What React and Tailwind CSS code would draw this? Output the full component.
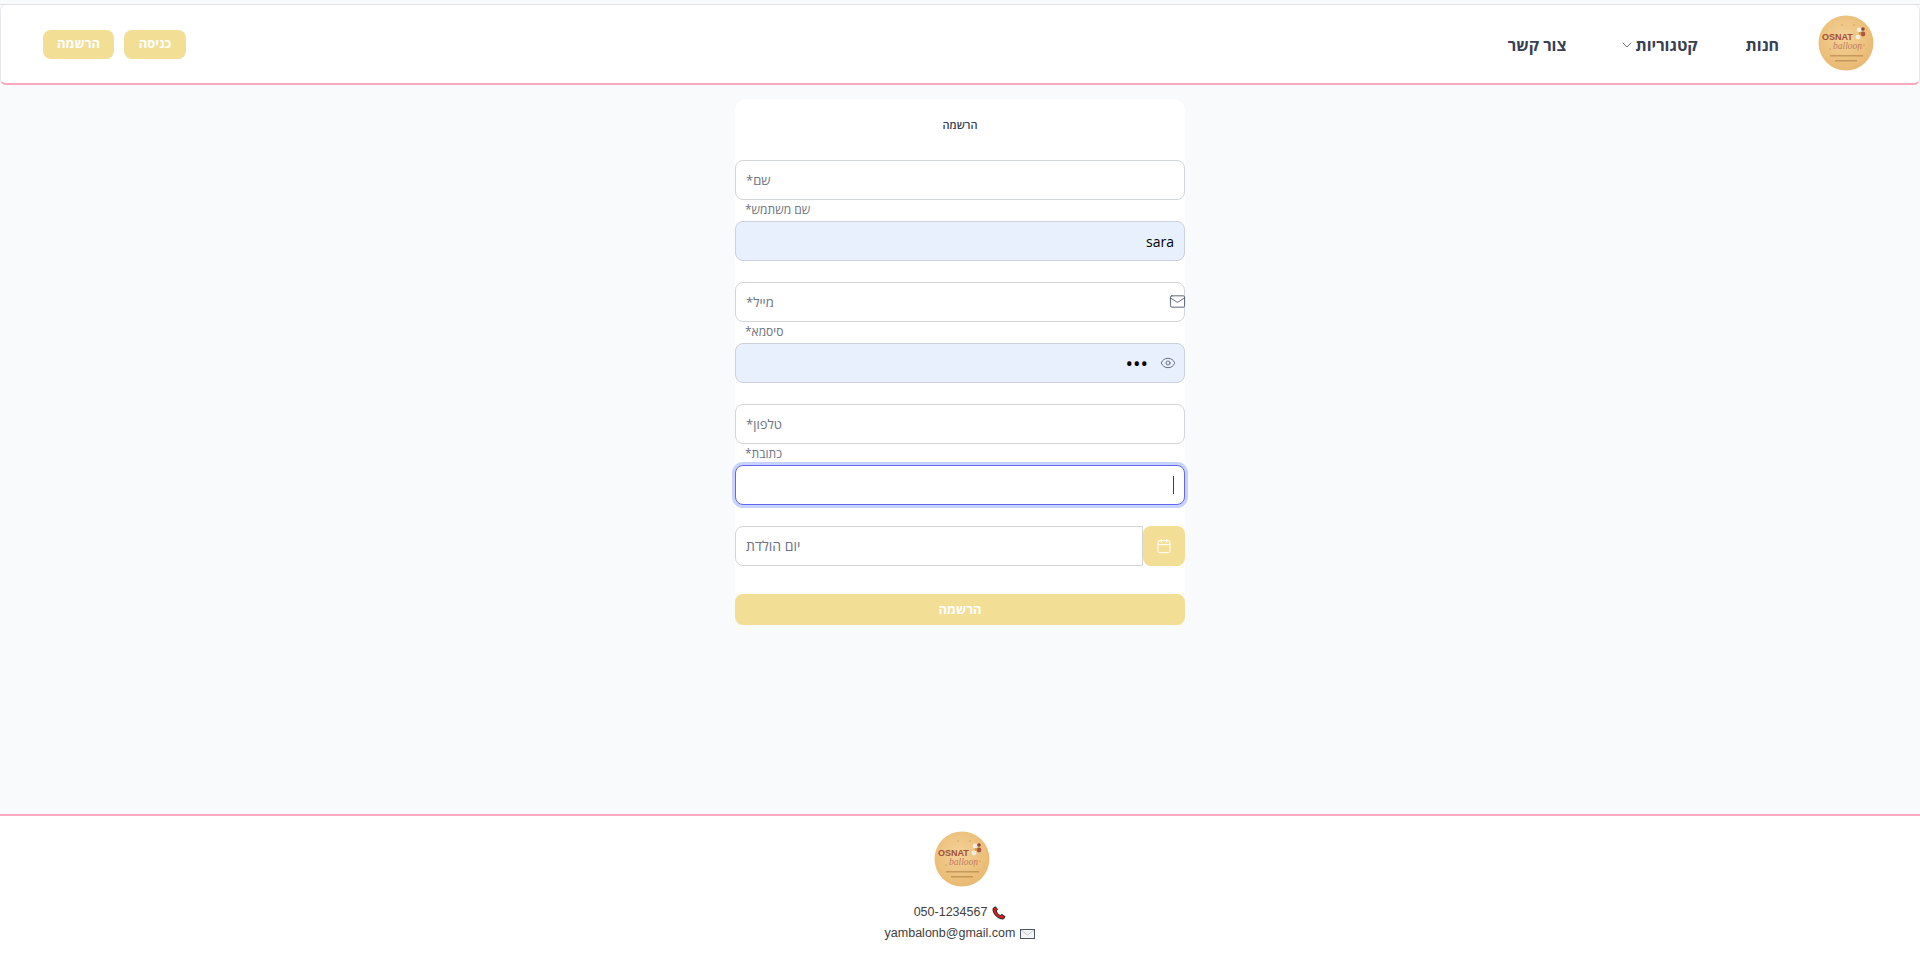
import React from "react";
import { Mail, Eye, Calendar, ChevronDown } from "lucide-react";

const Logo = ({ id }) => (
  <svg width="56" height="56" viewBox="0 0 56 56" className="shrink-0">
    <defs>
      <radialGradient id={id} cx="45%" cy="40%" r="65%">
        <stop offset="0%" stopColor="#f4d297" />
        <stop offset="100%" stopColor="#e8b76f" />
      </radialGradient>
    </defs>
    <circle cx="28" cy="28" r="27.5" fill={`url(#${id})`} />
    <text x="4" y="25" fontSize="9" fontWeight="700" fill="#a24f38" fontFamily="Liberation Sans, sans-serif" direction="ltr">
      OSNAT
    </text>
    <text x="15" y="34" fontSize="9.5" fontStyle="italic" fill="#c07a62" fontFamily="Liberation Serif, serif" direction="ltr">
      balloon
    </text>
    <circle cx="41" cy="15" r="2.4" fill="#f5ecdc" />
    <circle cx="45" cy="19" r="2.4" fill="#a9573f" />
    <circle cx="40" cy="22" r="2.4" fill="#f5ecdc" />
    <circle cx="45" cy="14" r="1.8" fill="#8d4a35" />
    <circle cx="42" cy="18.5" r="1.4" fill="#d79a4a" />
    <rect x="12" y="40" width="33" height="1.5" fill="#8f5a26" opacity="0.4" />
    <rect x="17" y="45" width="22" height="1.5" fill="#8f5a26" opacity="0.4" />
    <circle cx="36" cy="10" r="0.5" fill="#a86b2c" />
    <circle cx="24" cy="10" r="0.5" fill="#a86b2c" />
    <circle cx="46" cy="30" r="0.5" fill="#a86b2c" />
    <circle cx="40" cy="35" r="0.5" fill="#a86b2c" />
    <circle cx="12" cy="34" r="0.5" fill="#a86b2c" />
  </svg>
);

const Field = ({ placeholder, value, filled, focus, icon, type, pad }) => (
  <div className="relative">
    <input
      readOnly
      type={type || "text"}
      placeholder={placeholder}
      defaultValue={value}
      className={`block w-full h-10 rounded-lg px-[10px] text-black text-right placeholder:text-left placeholder:text-[13px] placeholder:text-[#6b7280] outline-none ${
        type === "password" ? "text-[20px]" : "text-[14px]"
      } ${placeholder ? "pb-[2px]" : ""} ${
        focus
          ? "border border-[#6366f1] ring-[3px] ring-[#c7d2fe] bg-white"
          : filled
            ? "border bg-[#e8f0fe] border-[#cbd0dc]"
            : "border bg-white border-[#d1d5db]"
      } ${pad ? "pr-[36px]" : ""}`}
    />
    {focus && <span className="absolute right-[11px] top-[11px] h-[18px] w-px bg-[#374151]" />}
    {icon}
  </div>
);

const Label = ({ children }) => (
  <label className="block h-[21px] px-[10px] pt-[2px] text-left text-[12px] leading-[16px] text-[#6b7280]">{children}</label>
);

const App = () => {
  return (
    <div dir="rtl" className="min-h-screen flex flex-col bg-[#f9fafb] font-['Open_Sans','Noto_Sans',sans-serif]">
      <div className="pt-[4px]">
        <div className="h-px bg-[#dfe1e5]" />
        <nav className="h-[80px] flex items-center justify-between pr-[45px] pl-[42px] bg-white rounded-md border-x border-[#e5e7eb] border-b-2 border-b-[#f9a8c0]">
          <div className="flex items-center">
            <div className="mb-[2px]">
              <Logo id="logo-top" />
            </div>
            <a className="mr-[39px] pt-[2px] text-[16px] font-bold text-[#374151]">חנות</a>
            <a className="mr-[48px] pt-[2px] flex items-center text-[16px] font-bold text-[#374151]">
              קטגוריות
              <ChevronDown size={16} strokeWidth={1.5} className="text-[#6b7280]" />
            </a>
            <a className="mr-[53px] pt-[2px] text-[16px] font-bold text-[#374151]">צור קשר</a>
          </div>
          <div className="flex items-center gap-[10px]">
            <button className="h-[29px] w-[62px] rounded-lg bg-[#f3de96] text-white text-[13px] font-bold">כניסה</button>
            <button className="h-[29px] w-[71px] rounded-lg bg-[#f3de96] text-white text-[13px] font-bold">הרשמה</button>
          </div>
        </nav>
      </div>

      <main className="flex-1 pt-[14px]">
        <div className="mx-auto w-[450px]">
          <form className="bg-white rounded-t-xl">
            <h2 className="h-[61px] pt-[16px] text-center text-[11px] leading-[20px] font-semibold text-[#374151]">הרשמה</h2>

            <Field placeholder="שם*" />
            <Label>שם משתמש*</Label>
            <Field value="sara" filled />

            <div className="h-[21px]" />
            <Field
              placeholder="מייל*"
              icon={<Mail size={17} strokeWidth={1.25} className="absolute right-[-1px] top-[11px] text-[#4b5563]" />}
            />
            <Label>סיסמא*</Label>
            <Field
              value="123"
              type="password"
              filled
              pad
              icon={<Eye size={16} strokeWidth={1.5} className="absolute right-[9px] top-[12px] text-[#6b7280]" />}
            />

            <div className="h-[21px]" />
            <Field placeholder="טלפון*" />
            <Label>כתובת*</Label>
            <Field focus />

            <div className="h-[21px]" />
            <div className="flex h-10">
              <div className="w-[42px] rounded-lg bg-[#f3de96] flex items-center justify-center">
                <Calendar size={16} strokeWidth={1.5} className="text-white" />
              </div>
              <input
                readOnly
                placeholder="יום הולדת"
                className="flex-1 min-w-0 rounded-l-lg border border-[#d1d5db] bg-white px-[10px] pb-[2px] text-[14px] text-right placeholder:text-left placeholder:text-[#6b7280] outline-none"
              />
            </div>
            <div className="h-[28px]" />
          </form>
          <button className="block w-full h-[31px] rounded-lg bg-[#f3de96] text-white text-[13px] font-bold">הרשמה</button>
        </div>
      </main>

      <footer className="h-[141px] shrink-0 bg-white border-t-2 border-[#f9a8c0] flex flex-col items-center pt-[15px]">
        <div className="translate-x-[2px]">
          <Logo id="logo-bottom" />
        </div>
        <div dir="ltr" className="mt-[15px] flex items-center gap-[5px] text-[12.5px] leading-[21px] text-[#404040] font-['Liberation_Sans',sans-serif]">
          <span>050-1234567</span>
          <svg width="14" height="14" viewBox="0 0 14 14">
            <path d="M1 2.5 L3.5 0.8 L5.5 3.5 L4.2 5 C4.8 6.8 6.2 8.6 8.2 9.6 L9.8 8.4 L13 10.6 L11.4 13 C6.5 13.4 0.5 8 1 2.5 Z" fill="#d81e1e" stroke="#1f1f1f" strokeWidth="1" />
          </svg>
        </div>
        <div dir="ltr" className="flex items-center gap-[5px] text-[12.5px] leading-[21px] text-[#404040] font-['Liberation_Sans',sans-serif]">
          <span>yambalonb@gmail.com</span>
          <svg width="15" height="12" viewBox="0 0 15 12">
            <rect x="0.5" y="1.5" width="14" height="9" fill="#f3f4f6" stroke="#4b5563" />
            <path d="M1 2 L7.5 7 L14 2" fill="none" stroke="#c4c7cc" />
          </svg>
        </div>
      </footer>
    </div>
  );
};

export default App;
